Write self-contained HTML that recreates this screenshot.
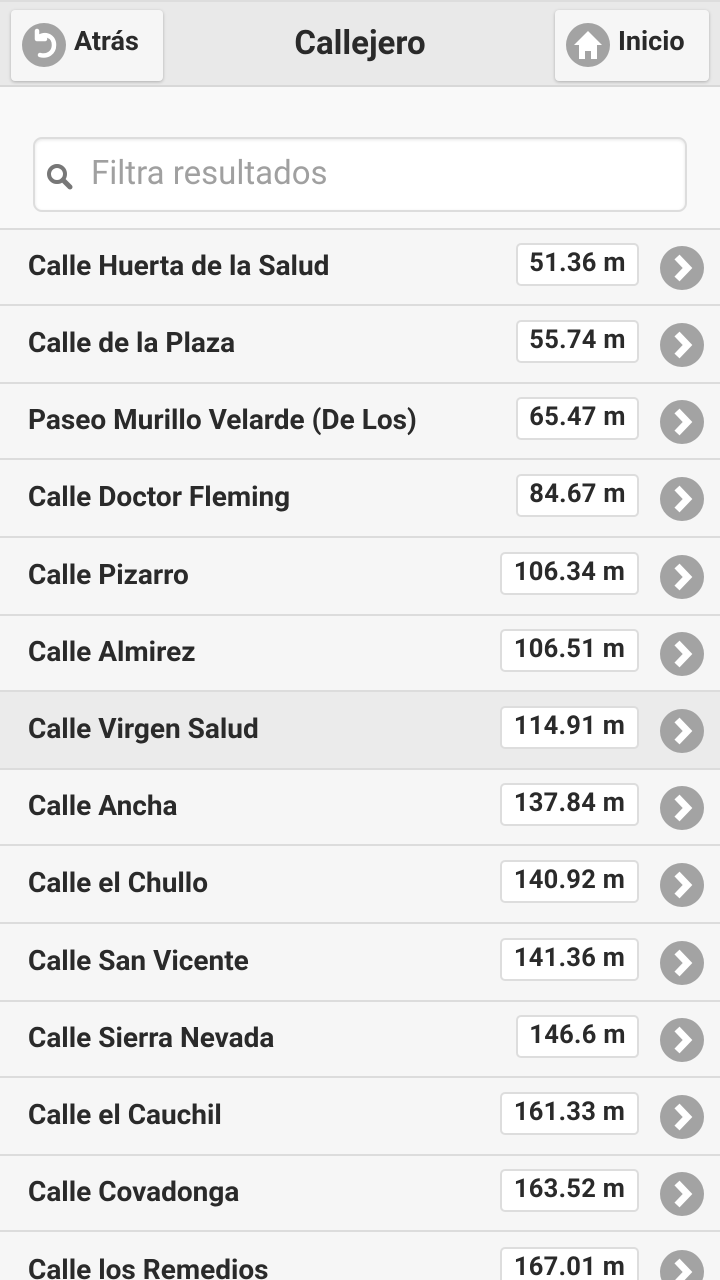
<!DOCTYPE html>
<html style="height:1280px;overflow:hidden"><head><meta charset="utf-8"><style>
*{margin:0;padding:0;box-sizing:border-box}
body{width:720px;height:1280px;overflow:hidden;background:#f9f9f9;font-family:"Roboto","Liberation Sans",sans-serif;position:relative;color:#2a2a2a}
.hdr{position:absolute;left:0;top:0;width:720px;height:87px;background:#e9e9e9;border-bottom:2px solid #d8d8d8;border-top:2px solid #ddd}
.btn{position:absolute;top:8px;height:71px;background:#f6f6f6;border-radius:4px;box-shadow:0 1px 3px rgba(0,0,0,.25);font-weight:bold;font-size:27px}
.btn .ic{position:absolute;left:11px;top:13px;width:44px;height:44px;border-radius:50%;background:#a3a3a3}
.btn span{position:absolute;left:63px;top:15px}
.title{position:absolute;left:0;width:720px;top:22px;text-align:center;font-weight:bold;font-size:33px}
.search{position:absolute;left:33px;top:137px;width:654px;height:75px;background:#fff;border:2px solid #ddd;border-radius:9px;box-shadow:inset 0 1px 3px rgba(0,0,0,.1)}
.search span{position:absolute;left:56px;top:15px;font-size:33px;color:#a0a0a0}
.row{position:absolute;left:0;width:720px;background:#f6f6f6;border-top:2px solid #dcdcdc}
.row.hl{background:#ebebeb}
.row .n{position:absolute;left:28px;font-weight:bold;font-size:28px;letter-spacing:0;color:#2a2a2a}
.row .b{position:absolute;right:81px;height:43px;background:#fff;border:2px solid #ddd;border-radius:5px;font-weight:bold;font-size:25.5px;text-align:center;line-height:37px;letter-spacing:.3px}
.row .a{position:absolute;left:660px;width:44px;height:44px;border-radius:50%;background:#a3a3a3}
</style></head><body>
<div class="hdr">
 <div class="btn" style="left:11px;width:152px"><div class="ic"><svg width="44" height="44" viewBox="0 0 44 44"><path d="M15 16 L15 8 M15 16 L23 16 M15 16 C21 9 32 12 32 22 C32 30 25 34 18 32" fill="none" stroke="#fff" stroke-width="4.5" stroke-linecap="round"/></svg></div><span>Atrás</span></div>
 <div class="title">Callejero</div>
 <div class="btn" style="left:555px;width:154px"><div class="ic"><svg width="44" height="44" viewBox="0 0 44 44"><path d="M22 8 L36 22 L31 22 L31 36 L25 36 L25 28 L19 28 L19 36 L13 36 L13 22 L8 22 Z" fill="#fff"/></svg></div><span>Inicio</span></div>
</div>
<div class="search"><svg style="position:absolute;left:10px;top:23px" width="30" height="30" viewBox="0 0 30 30"><circle cx="12" cy="12" r="8" fill="none" stroke="#777" stroke-width="4"/><path d="M18 18 L25 25" stroke="#777" stroke-width="5" stroke-linecap="round"/></svg><span>Filtra resultados</span></div>
<div id="list"></div>
<script>
var d=[["Calle Huerta de la Salud","51.36 m"],["Calle de la Plaza","55.74 m"],["Paseo Murillo Velarde (De Los)","65.47 m"],["Calle Doctor Fleming","84.67 m"],["Calle Pizarro","106.34 m"],["Calle Almirez","106.51 m"],["Calle Virgen Salud","114.91 m"],["Calle Ancha","137.84 m"],["Calle el Chullo","140.92 m"],["Calle San Vicente","141.36 m"],["Calle Sierra Nevada","146.6 m"],["Calle el Cauchil","161.33 m"],["Calle Covadonga","163.52 m"],["Calle los Remedios","167.01 m"]];
var tops=[228,304,382,458,536,614,690,768,844,922,1000,1076,1154,1230,1310];
var h='';
for(var i=0;i<d.length;i++){var t=tops[i],H=tops[i+1]-t;var w=d[i][1].length>7?139:123;
h+='<div class="row'+(i==6?' hl':'')+'" style="top:'+t+'px;height:'+H+'px"><div class="n" style="top:'+(H/2-19)+'px">'+d[i][0]+'</div><div class="b" style="width:'+w+'px;top:'+(H/2-25)+'px">'+d[i][1]+'</div><div class="a" style="top:'+(H/2-22)+'px"><svg width="44" height="44" viewBox="0 0 44 44"><path d="M17 11 L27.5 22 L17 33" fill="none" stroke="#fff" stroke-width="7"/></svg></div></div>';}
document.getElementById('list').innerHTML=h;
</script>
</body></html>
